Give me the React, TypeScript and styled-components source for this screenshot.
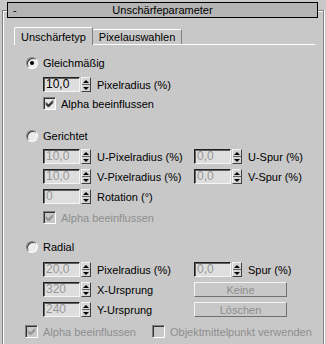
import React from "react";
import styled, { createGlobalStyle } from "styled-components";

const GlobalStyle = createGlobalStyle`
  html, body {
    margin: 0;
    padding: 0;
    background: #c8c8c8;
  }
  body {
    font-family: "Liberation Sans", Arial, sans-serif;
    font-size: 11px;
    color: #000;
    overflow: hidden;
  }
`;

const Screen = styled.div`
  width: 326px;
  height: 344px;
  padding-top: 10px;
  box-sizing: border-box;
  overflow: hidden;
`;

const Rollout = styled.div`
  margin: 0 2px;
  height: 340px;
  border: 1px solid #808080;
  border-bottom: none;
  box-shadow: inset 1px 1px 0 #fff, 1px 0 0 #fff;
`;

const TitleBar = styled.div`
  margin: -9px 5px 0 4px;
  height: 16px;
  box-sizing: border-box;
  border: 1px solid #000;
  background: #b4b4b4;
  display: grid;
  grid-template-columns: 1fr auto 1fr;
  align-items: center;
  padding: 0 5px;
  line-height: 14px;
`;

const Collapse = styled.span`
  justify-self: start;
`;

const TabStrip = styled.div`
  margin: 9px 8px 0 11px;
  height: 18px;
  box-sizing: border-box;
  display: flex;
  align-items: flex-end;
  border-bottom: 1px solid #fff;
`;

const Tab = styled.div<{ $active?: boolean }>`
  height: ${(p) => (p.$active ? 18 : 15)}px;
  margin-bottom: ${(p) => (p.$active ? -1 : 0)}px;
  box-sizing: border-box;
  padding: 0 ${(p) => (p.$active ? 6 : 6)}px 0 ${(p) => (p.$active ? 6 : 6)}px;
  display: flex;
  align-items: center;
  background: #c8c8c8;
  border-top: 1px solid #fff;
  border-left: ${(p) => (p.$active ? "1px solid #fff" : "none")};
  border-right: 1px solid #808080;
  border-top-left-radius: ${(p) => (p.$active ? 2 : 0)}px;
`;

const Section = styled.div<{ $top: number; $indent: number }>`
  margin-top: ${(p) => p.$top}px;
  padding-left: ${(p) => p.$indent}px;
`;

const RadioRow = styled.div`
  height: 13px;
  display: flex;
  align-items: center;
  gap: 5px;
`;

const RadioDot = styled.span<{ $checked?: boolean }>`
  width: 12px;
  height: 12px;
  box-sizing: border-box;
  border-radius: 50%;
  border: 1px solid;
  border-color: #808080 #fff #fff #808080;
  box-shadow: inset 1px 1px 0 #404040;
  background: #ececec;
  display: flex;
  align-items: center;
  justify-content: center;
  &::after {
    content: "";
    width: 4px;
    height: 4px;
    border-radius: 50%;
    background: ${(p) => (p.$checked ? "#000" : "transparent")};
  }
`;

const ParamGrid = styled.div<{ $cols: string }>`
  display: grid;
  grid-template-columns: ${(p) => p.$cols};
  row-gap: 5px;
`;

const SpinRow = styled.div`
  height: 15px;
  display: flex;
  align-items: center;
`;

const Field = styled.div<{ $disabled?: boolean }>`
  width: 37px;
  height: 15px;
  box-sizing: border-box;
  border: 1px solid;
  border-color: #202020 #f4f4f4 #f4f4f4 #202020;
  box-shadow: inset 1px 1px 0 #606060;
  background: #dedede;
  color: ${(p) => (p.$disabled ? "#989898" : "#000")};
  padding-left: 2px;
  line-height: 13px;
  font-size: 12px;
`;

const SpinButtons = styled.div`
  margin-left: 1px;
  width: 10px;
  height: 15px;
  display: flex;
  flex-direction: column;
  box-sizing: border-box;
  border: 1px solid;
  border-color: #f4f4f4 #404040 #404040 #f4f4f4;
  background: #d4d4d4;
`;

const SpinHalf = styled.div<{ $down?: boolean }>`
  flex: 1;
  display: flex;
  align-items: center;
  justify-content: center;
  border-top: ${(p) => (p.$down ? "1px solid #606060" : "none")};
  &::after {
    content: "";
    border-left: 3px solid transparent;
    border-right: 3px solid transparent;
    ${(p) =>
      p.$down ? "border-top: 3px solid #000;" : "border-bottom: 3px solid #000;"}
  }
`;

const Label = styled.span<{ $disabled?: boolean }>`
  margin-left: 6px;
  white-space: nowrap;
  color: ${(p) => (p.$disabled ? "#8e8e8e" : "#000")};
`;

const CheckRow = styled.div`
  height: 13px;
  display: flex;
  align-items: center;
  gap: 5px;
  white-space: nowrap;
`;

const CheckBox = styled.span<{ $disabled?: boolean }>`
  width: 13px;
  height: 13px;
  box-sizing: border-box;
  border: 1px solid;
  border-color: #808080 #fff #fff #808080;
  box-shadow: inset 1px 1px 0 #303030;
  background: ${(p) => (p.$disabled ? "#c8c8c8" : "#e6e6e6")};
  display: flex;
  align-items: center;
  justify-content: center;
  flex-shrink: 0;
`;

const CheckText = styled.span<{ $disabled?: boolean }>`
  color: ${(p) => (p.$disabled ? "#8e8e8e" : "#000")};
`;

const FlatButton = styled.div`
  width: 93px;
  height: 15px;
  box-sizing: border-box;
  border: 1px solid;
  border-color: #f4f4f4 #707070 #707070 #f4f4f4;
  color: #8e8e8e;
  display: flex;
  align-items: center;
  justify-content: center;
`;

const BottomRow = styled.div`
  display: grid;
  grid-template-columns: 127px 1fr;
`;

type SpinProps = { value: string; label: string; disabled?: boolean };

const Spinner = ({ value, label, disabled }: SpinProps) => (
  <SpinRow>
    <Field $disabled={disabled}>{value}</Field>
    <SpinButtons>
      <SpinHalf />
      <SpinHalf $down />
    </SpinButtons>
    <Label>{label}</Label>
  </SpinRow>
);

type CheckProps = { label: string; checked?: boolean; disabled?: boolean };

const Check = ({ label, checked, disabled }: CheckProps) => (
  <CheckRow>
    <CheckBox $disabled={disabled}>
      {checked && (
        <svg width="9" height="9" viewBox="0 0 9 9">
          <path
            d="M1 3.5 L3.5 6 L8 1.5 M1 4.5 L3.5 7 L8 2.5 M1 5.5 L3.5 8 L8 3.5"
            stroke={disabled ? "#888" : "#000"}
            strokeWidth="1"
            fill="none"
          />
        </svg>
      )}
    </CheckBox>
    <CheckText $disabled={disabled}>{label}</CheckText>
  </CheckRow>
);

const Radio = ({ label, checked }: { label: string; checked?: boolean }) => (
  <RadioRow>
    <RadioDot $checked={checked} />
    <span>{label}</span>
  </RadioRow>
);

export default function App() {
  return (
    <>
      <GlobalStyle />
      <Screen>
        <Rollout>
          <TitleBar>
            <Collapse>-</Collapse>
            <span>Unschärfeparameter</span>
            <span />
          </TitleBar>

          <TabStrip>
            <Tab $active>Unschärfetyp</Tab>
            <Tab>Pixelauswahlen</Tab>
          </TabStrip>

          <Section $top={11} $indent={23}>
            <Radio label="Gleichmäßig" checked />
          </Section>
          <Section $top={8} $indent={40}>
            <Spinner value="10,0" label="Pixelradius (%)" />
          </Section>
          <Section $top={5} $indent={40}>
            <Check label="Alpha beeinflussen" checked />
          </Section>

          <Section $top={19} $indent={23}>
            <Radio label="Gerichtet" />
          </Section>
          <Section $top={7} $indent={40}>
            <ParamGrid $cols="151px 1fr">
              <Spinner value="10,0" label="U-Pixelradius (%)" disabled />
              <Spinner value="0,0" label="U-Spur (%)" disabled />
              <Spinner value="10,0" label="V-Pixelradius (%)" disabled />
              <Spinner value="0,0" label="V-Spur (%)" disabled />
              <Spinner value="0" label="Rotation (°)" disabled />
            </ParamGrid>
          </Section>
          <Section $top={7} $indent={40}>
            <Check label="Alpha beeinflussen" checked disabled />
          </Section>

          <Section $top={16} $indent={23}>
            <Radio label="Radial" />
          </Section>
          <Section $top={9} $indent={40}>
            <ParamGrid $cols="151px 1fr">
              <Spinner value="20,0" label="Pixelradius (%)" disabled />
              <Spinner value="0,0" label="Spur (%)" disabled />
              <Spinner value="320" label="X-Ursprung" disabled />
              <FlatButton>Keine</FlatButton>
              <Spinner value="240" label="Y-Ursprung" disabled />
              <FlatButton>Löschen</FlatButton>
            </ParamGrid>
          </Section>
          <Section $top={8} $indent={22}>
            <BottomRow>
              <Check label="Alpha beeinflussen" checked disabled />
              <Check label="Objektmittelpunkt verwenden" disabled />
            </BottomRow>
          </Section>
        </Rollout>
      </Screen>
    </>
  );
}
